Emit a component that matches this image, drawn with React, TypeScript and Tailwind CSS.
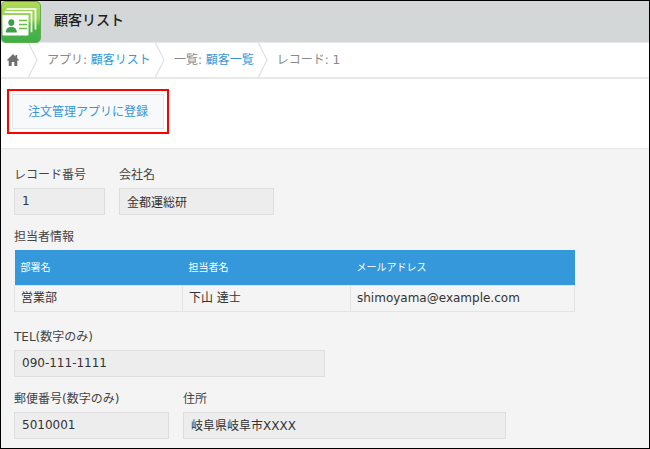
import type { ReactNode } from 'react';

function AppIcon() {
  return (
    <svg viewBox="0 0 40 42" className="h-[42px] w-10 shrink-0" aria-hidden="true">
      <defs>
        <linearGradient id="tile" x1="0" y1="0" x2="0" y2="1">
          <stop offset="0" stopColor="#a4d63c" />
          <stop offset="0.5" stopColor="#7cc742" />
          <stop offset="0.6" stopColor="#4fb545" />
          <stop offset="1" stopColor="#3fae49" />
        </linearGradient>
      </defs>
      <rect x="0.500" y="0.500" width="39" height="41" rx="4.500" fill="url(#tile)" stroke="#5cb04c" />
      <path d="M1 1h33q5 0 5 5v13Q22 20 1 31z" fill="#fff" fillOpacity="0.14" />
      <path d="M5.500 8h29v20.500" fill="none" stroke="#fff" strokeWidth="1.700" />
      <path d="M3.500 11.200h27v20" fill="none" stroke="#fff" strokeWidth="1.700" />
      <rect x="1.500" y="14" width="26" height="20.500" rx="0.800" fill="#fff" />
      <ellipse cx="10.300" cy="21.600" rx="3" ry="3.400" fill="#3fa04a" />
      <path d="M4.800 31.500c0-4 2.200-5.500 5.500-5.500s5.500 1.500 5.500 5.500z" fill="#3fa04a" />
      <path d="M18 19.500h8M18 23.500h8M18 27.500h8" stroke="#6abf45" strokeWidth="1.500" />
    </svg>
  );
}

function HomeIcon() {
  return (
    <svg viewBox="0 0 12 12" className="block size-3" aria-hidden="true">
      <path
        d="M6 0 0 6l.9.9L1.700 6.200V12h3V8h2.600v4h3V6.200l.8.7.9-.9L10.200 4.200V1H8.500v1.500z"
        fill="#6f6f6f"
      />
    </svg>
  );
}

function Chevron() {
  return (
    <svg viewBox="0 0 10 34" className="h-[34px] w-[10px] shrink-0" aria-hidden="true">
      <path d="M0.500 0 9 17 0.500 34" fill="none" stroke="#dfe3e3" strokeWidth="1.300" />
    </svg>
  );
}

function Crumb({ children }: { children: ReactNode }) {
  return (
    <li className="flex items-center">
      <Chevron />
      <span className="pr-1 pl-[9px] whitespace-nowrap">{children}</span>
    </li>
  );
}

function Field({ id, label, value, width }: { id: string; label: string; value: string; width: string }) {
  return (
    <div className={`flex max-w-full flex-col gap-1 ${width}`}>
      <label htmlFor={id} className="leading-[18px]">
        {label}
      </label>
      <input
        id={id}
        readOnly
        defaultValue={value}
        className="h-[27px] w-full border border-[#dedede] bg-[#ededed] px-[7px] pb-px text-[#333] outline-none"
      />
    </div>
  );
}

const contacts = [{ dept: '営業部', name: '下山 達士', mail: 'shimoyama@example.com' }];

export default function App() {
  return (
    <div className="min-h-screen border border-black bg-[#f4f4f4] font-['DejaVu_Sans','Noto_Sans_CJK_JP',sans-serif] text-xs text-[#444]">
      <header className="flex h-[42px] items-center gap-[13px] border-b border-[#e6eaea] bg-[#d3d7d7]">
        <AppIcon />
        <h1 className="pb-1 text-sm font-medium text-[#222]">顧客リスト</h1>
      </header>

      <nav aria-label="breadcrumb" className="border-b-2 border-[#e8eaea] bg-white text-[#888]">
        <ol className="flex h-[34px] items-center">
          <li className="pr-[9px] pl-[6px]">
            <a href="#home" aria-label="ホーム" className="block">
              <HomeIcon />
            </a>
          </li>
          <Crumb>
            アプリ: <a href="#app" className="text-[#3498db]">顧客リスト</a>
          </Crumb>
          <Crumb>
            一覧: <a href="#view" className="text-[#3498db]">顧客一覧</a>
          </Crumb>
          <Crumb>レコード: 1</Crumb>
        </ol>
      </nav>

      <div className="flex border-b border-[#e3e7e8] bg-white px-[6px] pt-[10px] pb-[14px]">
        <div className="border-2 border-[#f00] p-[3px]">
          <button
            type="button"
            className="h-[35px] border border-[#e3e7e8] bg-[#f7f9fa] px-[15px] text-[#3498db]"
          >
            注文管理アプリに登録
          </button>
        </div>
      </div>

      <main className="flex flex-col gap-[13px] px-[13px] pt-[17px] pb-2">
        <div className="flex flex-wrap gap-[14px]">
          <Field id="record" label="レコード番号" value="1" width="w-[91px]" />
          <Field id="company" label="会社名" value="金都運総研" width="w-[155px]" />
        </div>

        <section className="flex flex-col gap-1 pb-[3px]">
          <h2 className="leading-[18px]">担当者情報</h2>
          <table className="w-[561px] max-w-full table-fixed border-collapse text-left">
            <colgroup>
              <col className="w-[30%]" />
              <col className="w-[30%]" />
              <col />
            </colgroup>
            <thead>
              <tr className="h-[35px] bg-[#3498db] text-[10px] text-white">
                <th className="px-[6px] font-normal">部署名</th>
                <th className="px-[6px] font-normal">担当者名</th>
                <th className="px-[6px] font-normal">メールアドレス</th>
              </tr>
            </thead>
            <tbody>
              {contacts.map((c) => (
                <tr key={c.mail} className="h-[26px] text-[#333]">
                  <td className="border border-[#e0e4e4] px-[6px]">{c.dept}</td>
                  <td className="border border-[#e0e4e4] px-[6px]">{c.name}</td>
                  <td className="border border-[#e0e4e4] px-[6px]">{c.mail}</td>
                </tr>
              ))}
            </tbody>
          </table>
        </section>

        <Field id="tel" label="TEL(数字のみ)" value="090-111-1111" width="w-[311px]" />

        <div className="flex flex-wrap gap-[14px]">
          <Field id="zip" label="郵便番号(数字のみ)" value="5010001" width="w-[155px]" />
          <Field id="address" label="住所" value="岐阜県岐阜市XXXX" width="w-[323px]" />
        </div>
      </main>
    </div>
  );
}
